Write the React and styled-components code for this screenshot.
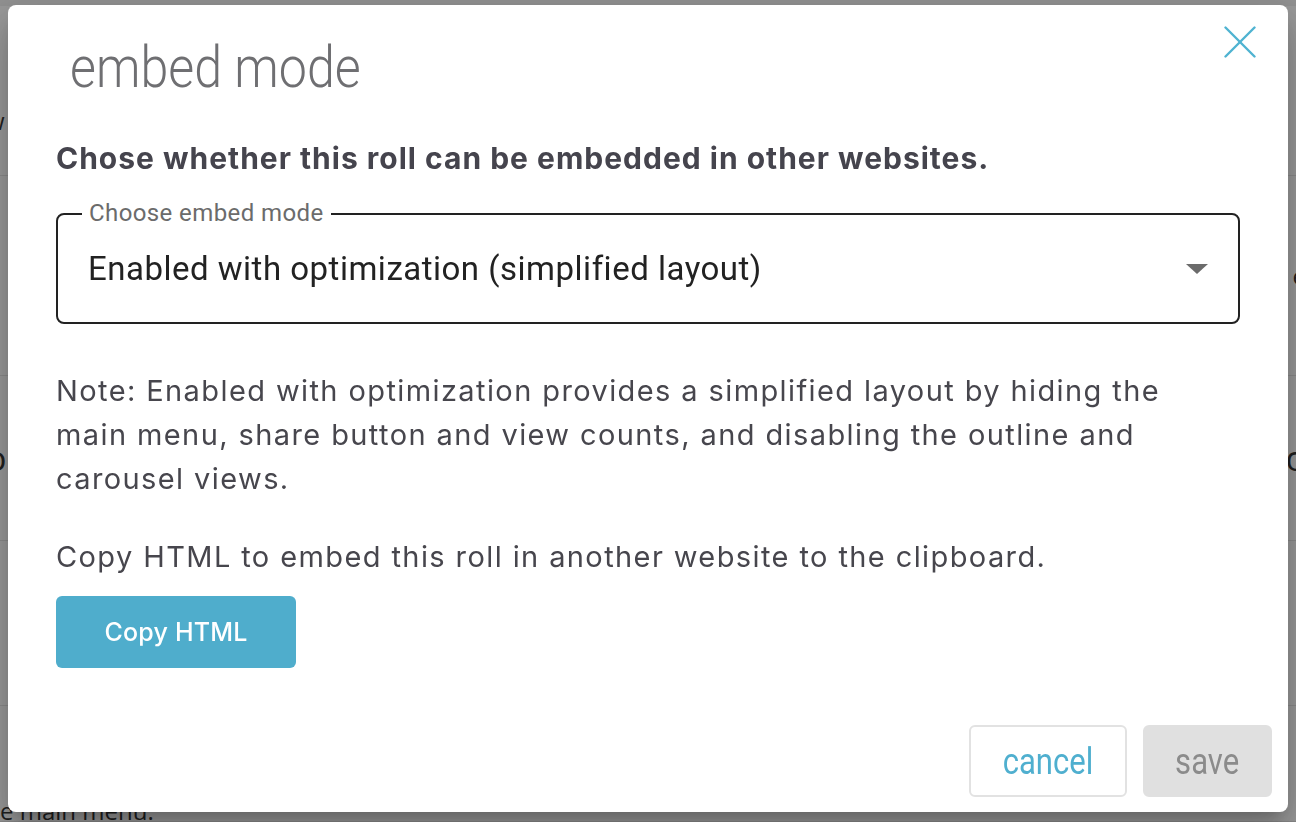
import React from "react";
import styled, { createGlobalStyle } from "styled-components";

const Global = createGlobalStyle`
  html, body { margin: 0; padding: 0; }
  body { background: #fff; font-family: Inter, "Noto Sans", sans-serif; overflow: hidden; }
  * { box-sizing: border-box; }
`;

const Page = styled.div`
  width: 1296px;
  height: 822px;
  display: flex;
  flex-direction: column;
  background: #fff;
  font-family: "Open Sans", sans-serif;
  color: #222;
`;

const Header = styled.div`
  height: 6px;
  background: #f2f2f2;
`;

const Row = styled.div`
  height: ${(p) => p.$h}px;
  border-bottom: 1px solid #e6e6e6;
  display: flex;
  align-items: ${(p) => p.$align || "center"};
  justify-content: space-between;
  font-size: ${(p) => (p.$big ? 34 : 24)}px;
  color: #333;
  margin-left: -14px;
  margin-right: -10px;
`;

const Overlay = styled.div`
  position: fixed;
  inset: 0;
  background: rgba(0, 0, 0, 0.4);
  display: flex;
  padding: 5px 8px 10px 8px;
`;

const Dialog = styled.div`
  flex: 1;
  background: #fff;
  border-radius: 8px;
  box-shadow: 0 11px 15px -7px rgba(0,0,0,0.2), 0 24px 38px 3px rgba(0,0,0,0.14), 0 9px 46px 8px rgba(0,0,0,0.12);
  display: flex;
  flex-direction: column;
  position: relative;
  padding: 0 48px 0 48px;
`;

const Title = styled.h2`
  margin: 0;
  padding: 31px 0 0 16px;
  font-family: Roboto, sans-serif;
  font-weight: 300;
  font-size: 57px;
  line-height: 64px;
  color: #6f6f72;
  transform: scaleX(0.88);
  transform-origin: left center;
`;

const CloseButton = styled.button`
  position: absolute;
  top: 21px;
  right: 32px;
  width: 32px;
  height: 32px;
  border: none;
  background: none;
  padding: 0;
  display: flex;
  cursor: pointer;
`;

const Body = styled.div`
  flex: 1;
  display: flex;
  flex-direction: column;
  padding-top: 40px;
`;

const Lead = styled.p`
  margin: 0;
  font-family: Inter, sans-serif;
  font-weight: 700;
  font-size: 30px;
  line-height: 36px;
  color: #45444d;
  letter-spacing: 1px;
`;

const Field = styled.div`
  margin-top: 37px;
  border: 2px solid #222;
  border-radius: 8px;
  height: 111px;
  padding: 0 30px 0 30px;
  display: flex;
  align-items: center;
  justify-content: space-between;
  position: relative;
`;

const Label = styled.span`
  position: absolute;
  top: -17px;
  left: 24px;
  padding: 0 7px;
  background: #fff;
  font-family: Roboto, sans-serif;
  font-size: 24px;
  line-height: 30px;
  color: #6b6b6b;
  letter-spacing: 0.4px;
`;

const Value = styled.span`
  font-family: Roboto, sans-serif;
  font-size: 33px;
  color: #222;
  letter-spacing: 0.5px;
`;

const Arrow = styled.span`
  width: 0;
  height: 0;
  border-left: 11px solid transparent;
  border-right: 11px solid transparent;
  border-top: 10px solid #6b6b6b;
`;

const Text = styled.p`
  margin: ${(p) => p.$mt}px 0 0 0;
  font-family: Inter, sans-serif;
  font-size: 29px;
  line-height: 44px;
  color: #47464d;
  letter-spacing: 1.4px;
  max-width: 1130px;
`;

const PrimaryButton = styled.button`
  margin-top: 17px;
  align-self: flex-start;
  width: 240px;
  height: 72px;
  border: none;
  border-radius: 6px;
  background: #4fadcc;
  color: #fff;
  font-family: Inter, sans-serif;
  font-size: 25px;
  font-weight: 500;
  letter-spacing: 0.2px;
  cursor: pointer;
`;

const Footer = styled.div`
  display: flex;
  justify-content: flex-end;
  gap: 16px;
  padding: 0 0 15px 0;
  margin-right: -32px;
`;

const FooterButton = styled.button`
  height: 72px;
  width: ${(p) => p.$w}px;
  border-radius: 6px;
  border: 2px solid ${(p) => (p.$disabled ? "#e0e0e0" : "#e2e2e2")};
  background: ${(p) => (p.$disabled ? "#e0e0e0" : "#fff")};
  color: ${(p) => (p.$disabled ? "#8b8b8b" : "#4fafcf")};
  font-family: Roboto, sans-serif;
  font-size: 37px;
  font-weight: 400;
  cursor: pointer;
  padding: 0;
  span { display: inline-block; transform: scaleX(0.84); }
`;

export default function App() {
  return (
    <>
      <Global />
      <Page>
        <Header />
        <Row $h={170}><span style={{ marginTop: 60 }}>w</span><span /></Row>
        <Row $h={200}><span>u</span><span>e</span></Row>
        <Row $h={165} $big><span>o</span><span>o</span></Row>
        <Row $h={165}><span>n</span><span /></Row>
        <Row $h={116} $align="flex-end"><span style={{ marginLeft: 14, marginBottom: -6 }}>e main menu.</span><span /></Row>
      </Page>
      <Overlay>
        <Dialog role="dialog">
          <Title>embed mode</Title>
          <CloseButton aria-label="close">
            <svg width="32" height="32" viewBox="0 0 32 32" fill="none" stroke="#4fb3d1" strokeWidth="2.4" strokeLinecap="round">
              <line x1="1.5" y1="1.5" x2="30.5" y2="30.5" />
              <line x1="30.5" y1="1.5" x2="1.5" y2="30.5" />
            </svg>
          </CloseButton>
          <Body>
            <Lead>Chose whether this roll can be embedded in other websites.</Lead>
            <Field>
              <Label>Choose embed mode</Label>
              <Value>Enabled with optimization (simplified layout)</Value>
              <Arrow />
            </Field>
            <Text $mt={45}>
              Note: Enabled with optimization provides a simplified layout by hiding the main menu, share button and view counts, and disabling the outline and carousel views.
            </Text>
            <Text $mt={34}>Copy HTML to embed this roll in another website to the clipboard.</Text>
            <PrimaryButton>Copy HTML</PrimaryButton>
          </Body>
          <Footer>
            <FooterButton $w={158}><span>cancel</span></FooterButton>
            <FooterButton $w={129} $disabled><span>save</span></FooterButton>
          </Footer>
        </Dialog>
      </Overlay>
    </>
  );
}
